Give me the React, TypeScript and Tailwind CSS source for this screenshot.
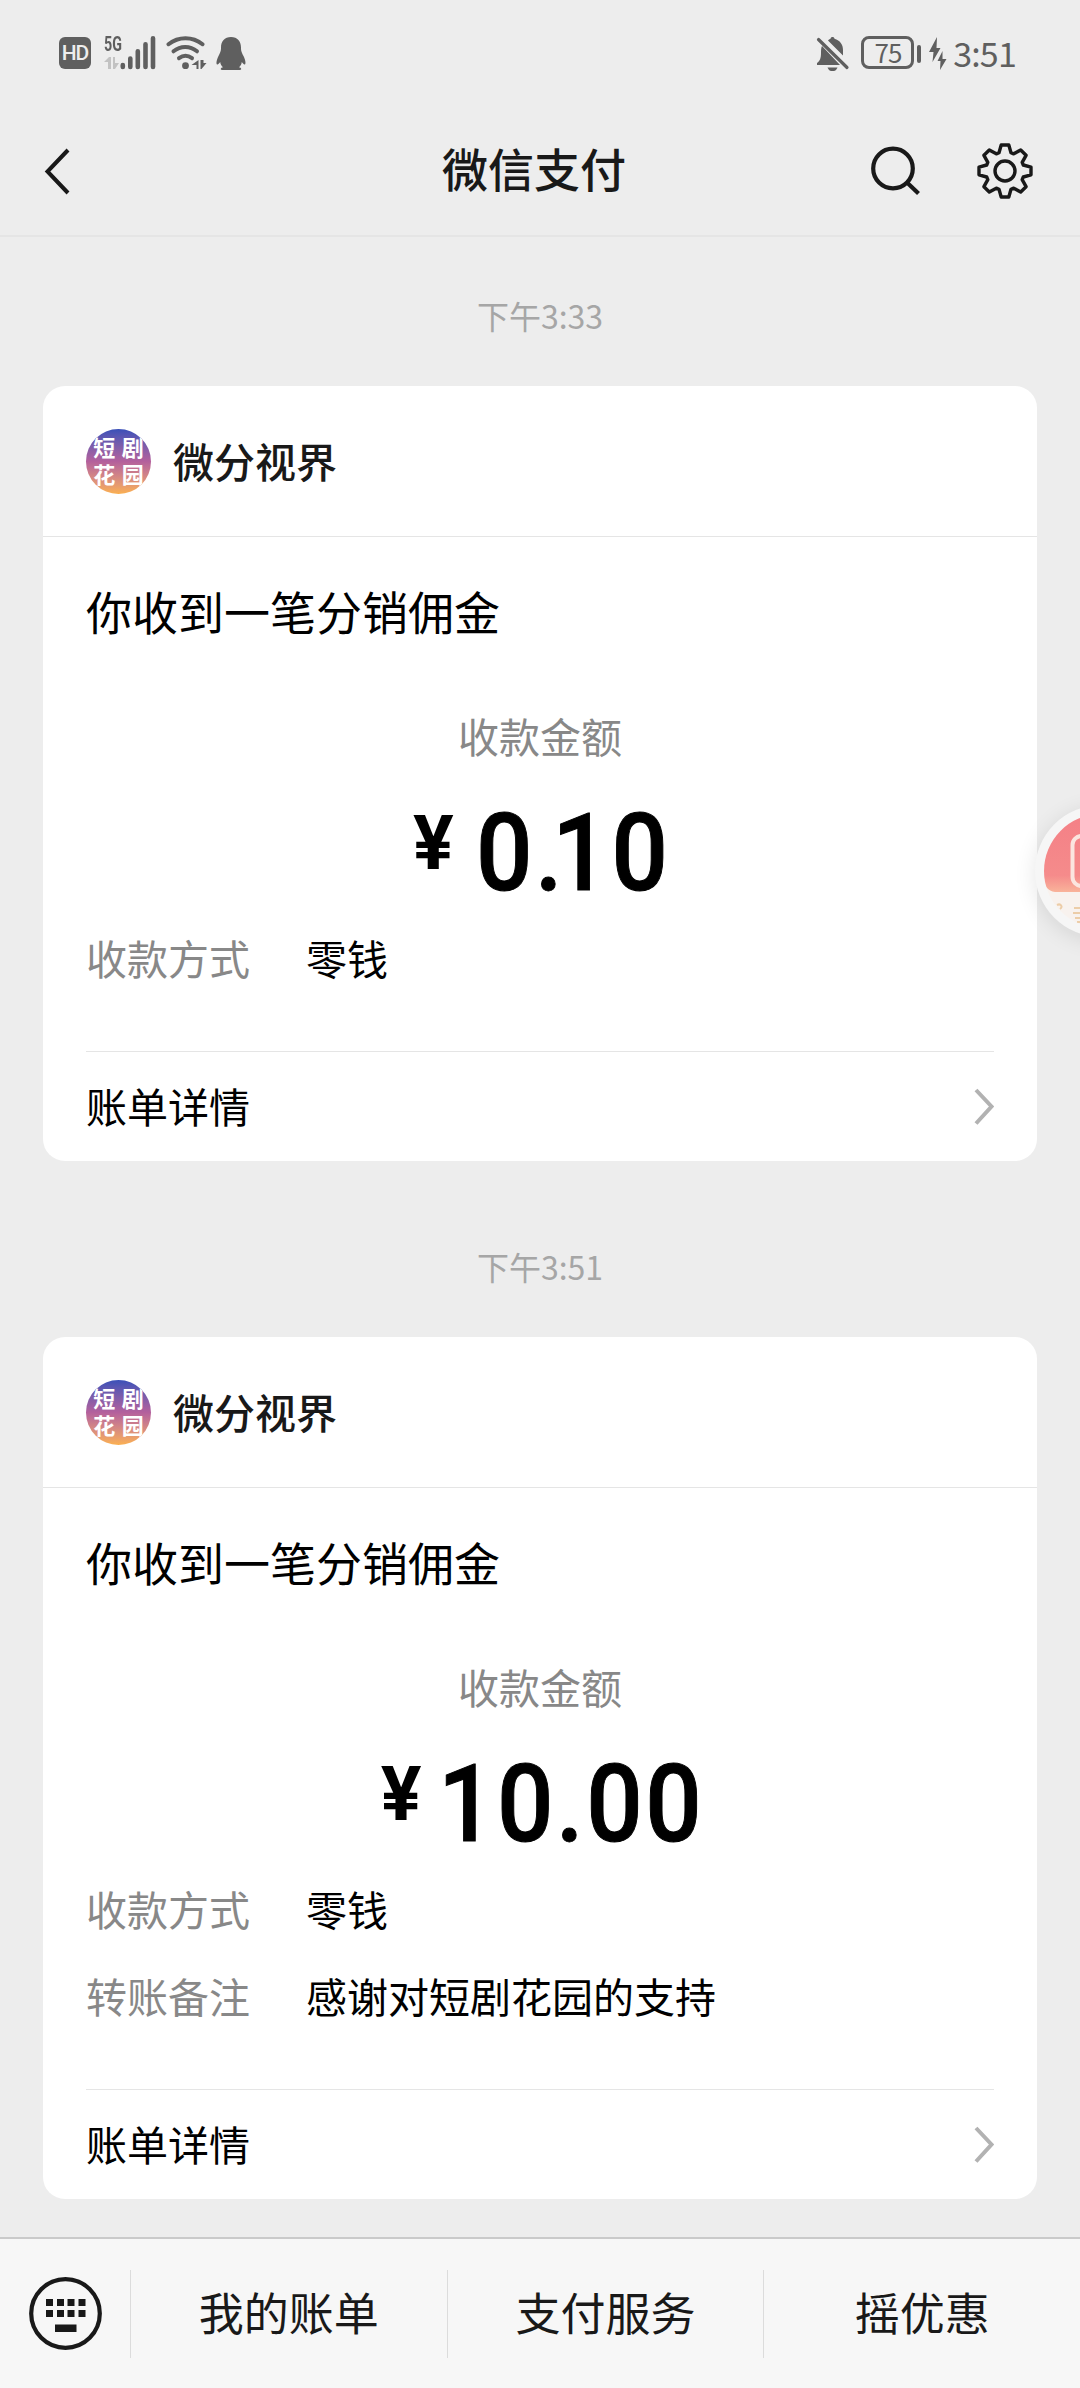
import type { ReactNode } from 'react';

interface PayRow {
  label: string;
  value: string;
}

interface PayMessage {
  id: number;
  time: string;
  whole: string;
  cents: string;
  tight: boolean;
  rows: PayRow[];
}

const messages: PayMessage[] = [
  {
    id: 1,
    time: '3:33',
    whole: '0.',
    cents: '10',
    tight: true,
    rows: [{ label: '收款方式', value: '零钱' }],
  },
  {
    id: 2,
    time: '3:51',
    whole: '10.',
    cents: '00',
    tight: false,
    rows: [
      { label: '收款方式', value: '零钱' },
      { label: '转账备注', value: '感谢对短剧花园的支持' },
    ],
  },
];

const menus = ['我的账单', '支付服务', '摇优惠'];

// Outline of one gear tooth, repeated every 45 degrees
const tooth = [[-6, -18.3], [-3.8, -26], [3.8, -26], [6, -18.3]];
const gearPoints = Array.from({ length: 8 }, (_, i) => {
  const a = (i * Math.PI) / 4;
  return tooth
    .map(([x, y]) => `${(x * Math.cos(a) - y * Math.sin(a)).toFixed(2)},${(x * Math.sin(a) + y * Math.cos(a)).toFixed(2)}`)
    .join(' ');
}).join(' ');

function StatusBar() {
  return (
    <div className="flex h-[106px] items-start justify-between pl-[59px] pr-[64px] pt-[36px] text-[#5f5f5f]">
      <div className="flex items-start">
        <div className="mt-px flex h-8 w-8 items-center justify-center rounded-[6px] bg-[#5f5f5f] font-['Roboto',sans-serif] text-[21px] font-medium leading-none tracking-[-1px] text-[#ededed]">
          HD
        </div>
        <div className="ml-[13px] flex w-[17px] flex-col">
          <span className="origin-left scale-x-[0.68] whitespace-nowrap font-['Roboto',sans-serif] text-[21px] font-bold leading-[16px]">5G</span>
          <svg className="mt-[4px]" width="16" height="14" viewBox="0 0 16 14" fill="#c2c2c2">
            <path d="M5 1h2v12H4V6H0zM9 1h2v6h4l-4 6H9z" />
          </svg>
        </div>
        <svg className="-ml-px" width="36" height="34" viewBox="0 0 36 34" stroke="currentColor" strokeWidth="4.6" strokeLinecap="round">
          <path d="M2.8 29v2M10.3 22.5V31M17.8 15.3V31M25.5 8.3V31M33 2.3V31" />
        </svg>
        <svg className="ml-[10px]" width="42" height="34" viewBox="0 0 42 34" fill="none" stroke="currentColor" strokeWidth="4" strokeLinecap="round">
          <path d="M2.5 8.2C12.5.2 26.5.2 36.5 8.2" />
          <path d="M7.5 15.3C14.5 9.6 24 9.6 31 15.3" />
          <path d="M13 22.2C17 19.2 22 19.2 26 22.2" />
          <circle cx="19.5" cy="29.7" r="3.4" fill="currentColor" stroke="none" />
          <path d="M32.500 24v9h-2v-4h-5zM34.500 24v9h1l5-6h-3v-3z" fill="currentColor" stroke="none" />
        </svg>
        <svg className="ml-[8px]" width="30" height="35" viewBox="0 0 30 35" fill="currentColor">
          <path d="M15 1C8.5 1 5 5.500 5 11.500C5 15 4.500 16 2.500 20C.5 24 0 27.500 1 28.500C2 29 3.500 27 4.200 26C4.500 28.500 5.500 30 7 31.300C4.500 31.800 4 33.800 6 34H24C26 33.800 25.500 31.800 23 31.300C24.500 30 25.500 28.500 25.800 26C26.500 27 28 29 29 28.500C30 27.500 29.500 24 27.500 20C25.500 16 25 15 25 11.500C25 5.500 21.500 1 15 1Z" />
        </svg>
      </div>
      <div className="flex items-start">
        <svg width="34" height="35" viewBox="0 0 34 35" fill="currentColor">
          <path d="M12 4.500C13 3.500 14 3 14.500 2.800C14.700 .4 18.300 .4 18.500 2.800C24 4.500 27 8.500 27 14V19.500Z" />
          <path d="M6 10C5 12 5 14 5 17C5 22 4 25 1 27V29H24Z" />
          <path d="M11.500 31.500H21.500C20.500 34.500 18.500 35 16.500 35C14.500 35 12.500 34.500 11.500 31.500Z" />
          <path d="M2.500 3.500L31 31.500" stroke="currentColor" strokeWidth="3.200" strokeLinecap="round" />
        </svg>
        <div className="ml-[11px] flex h-[33px] w-[53px] items-center justify-center rounded-[8px] border-[3px] border-[#5f5f5f] pb-[2px] pl-px font-['Noto_Sans_CJK_SC',sans-serif] text-[26px] leading-none tracking-[-0.8px]">
          75
        </div>
        <div className="ml-[3px] mt-[9px] h-[18px] w-1 rounded-[2px] bg-[#5f5f5f]" />
        <svg className="ml-[8px] mt-px" width="18" height="33" viewBox="0 0 18 33" fill="currentColor">
          <path d="M8 0L0 15H4.500L3.500 25L11.500 11H7.500zM13.500 14L8.500 24H11.500L11 33L17.500 22H13.500z" />
        </svg>
        <span className="ml-[6px] whitespace-nowrap font-['Noto_Sans_CJK_SC',sans-serif] text-[34px] leading-[34px] tracking-[-0.8px]">3:51</span>
      </div>
    </div>
  );
}

function NavBar() {
  return (
    <div className="flex h-[131px] items-start border-b-2 border-[#e5e5e5] pl-[43px] pt-[36px] text-[#191919]">
      <svg className="mt-[4px]" width="30" height="50" viewBox="0 0 30 50" fill="none" stroke="currentColor" strokeWidth="4">
        <path d="M25 4L4.500 25.500L25 47" />
      </svg>
      <h1 className="-mt-[3px] ml-[369px] w-[184px] whitespace-nowrap text-[46px] font-medium leading-[56px]">微信支付</h1>
      <svg className="ml-[242px]" width="56" height="56" viewBox="0 0 56 56" fill="none" stroke="currentColor" strokeWidth="4.200">
        <circle cx="25" cy="26.500" r="19.800" />
        <path d="M39.500 41L50.500 51.500" />
      </svg>
      <svg className="ml-[52px]" width="58" height="58" viewBox="-29 -29 58 58" fill="none" stroke="currentColor" strokeWidth="3.400" strokeLinejoin="round">
        <polygon points={gearPoints} />
        <circle r="10" />
      </svg>
    </div>
  );
}

function Avatar() {
  return (
    <div className="grid h-[65px] w-[65px] grid-cols-2 content-center justify-items-center gap-x-1 overflow-hidden rounded-full bg-linear-to-b from-[#3a50b8] via-[#b4609c] to-[#fbb04f] px-[6px] pb-[3px] text-[22px] font-bold leading-[27px] text-white">
      <span>短</span>
      <span>剧</span>
      <span>花</span>
      <span>园</span>
    </div>
  );
}

function Line({ children }: { children: ReactNode }) {
  return <div className="flex h-[87px] items-center pb-[2px] text-[41px] leading-[60px]">{children}</div>;
}

function Amount({ message }: { message: PayMessage }) {
  return (
    <div className="mt-[35px] flex h-[114px] items-start justify-center whitespace-nowrap font-['Roboto',sans-serif] font-medium">
      <span className="mt-[16px] text-[76px] font-bold leading-[54px]">¥</span>
      <span
        className={`mt-[15px] origin-left scale-x-[0.92] text-[108px] leading-[77px] tracking-[2.8px] [-webkit-text-stroke:1px_#000] ${
          message.tight ? 'ml-[22px] -mr-[20px]' : 'ml-[16px] -mr-[28px]'
        }`}
      >
        {message.whole}
        <span className={message.tight ? '-ml-[14px]' : ''}>{message.cents}</span>
      </span>
    </div>
  );
}

function PayCard({ message }: { message: PayMessage }) {
  return (
    <section className="mx-[43px] rounded-[22px] bg-white text-black">
      <header className="flex h-[151px] items-center gap-[22px] border-b border-[#e5e5e5] pl-[43px]">
        <Avatar />
        <span className="pb-[3px] text-[41px] font-medium leading-[60px] text-[#191919]">微分视界</span>
      </header>
      <div className="px-[43px]">
        <h2 className="pt-[39px] text-[46px] leading-[68px]">你收到一笔分销佣金</h2>
        <p className="mt-[61px] text-center text-[41px] leading-[60px] text-[#888888]">收款金额</p>
        <Amount message={message} />
        {message.rows.map((row) => (
          <Line key={row.label}>
            <span className="w-[220px] text-[#888888]">{row.label}</span>
            <span>{row.value}</span>
          </Line>
        ))}
        <footer className="mt-[50px] flex h-[110px] items-center justify-between border-t border-[#e5e5e5]">
          <span className="pb-[4px] text-[41px] leading-[60px]">账单详情</span>
          <svg width="20" height="38" viewBox="0 0 20 38" fill="none" stroke="#b2b2b2" strokeWidth="4">
            <path d="M2 2L17.500 18.500L2 35.500" />
          </svg>
        </footer>
      </div>
    </section>
  );
}

function FloatingBall() {
  return (
    <svg className="absolute right-0 top-[771px]" width="100" height="200" viewBox="981 771 100 200">
      <defs>
        <linearGradient id="ball" x1="0" y1="0" x2="0" y2="1">
          <stop offset="0" stopColor="#f47f86" />
          <stop offset="0.800" stopColor="#f58b8b" />
          <stop offset="1" stopColor="#f9b39a" />
        </linearGradient>
        <filter id="ballShadow" x="-50%" y="-50%" width="200%" height="200%">
          <feGaussianBlur stdDeviation="11" />
        </filter>
        <clipPath id="ballClip">
          <circle cx="1102" cy="871" r="57" />
        </clipPath>
      </defs>
      <circle cx="1102" cy="875" r="66" fill="#000" opacity="0.100" filter="url(#ballShadow)" />
      <circle cx="1102" cy="871" r="66" fill="#f6f6f6" />
      <g clipPath="url(#ballClip)">
        <rect x="1040" y="810" width="120" height="125" fill="#f8f2ee" />
        <path d="M1040 810H1160V892H1056C1049 891 1045 886 1045 878Z" fill="url(#ball)" />
        <rect x="1073.500" y="836" width="50" height="50" rx="9" fill="none" stroke="#fbe5df" strokeWidth="4" />
        <path d="M1058 905c4-2 6 2 3 4M1075 908h8M1074 913h9M1076 918h8M1078 922h6" fill="none" stroke="#eccda8" strokeWidth="2" />
      </g>
    </svg>
  );
}

function BottomMenu() {
  return (
    <nav className="flex h-[151px] items-center border-t-2 border-[#cacaca] bg-[#f7f7f7] text-[#191919]">
      <div className="flex w-[130px] pl-[28px]">
        <svg width="75" height="75" viewBox="0 0 75 75" fill="currentColor">
          <circle cx="37.500" cy="37.500" r="34.300" fill="none" stroke="currentColor" strokeWidth="4.200" />
          <path d="M18 23h7v7h-7zM29 23h7v7h-7zM39.500 23h7v7h-7zM50.500 23h7v7h-7zM18 34h7v7h-7zM29 34h7v7h-7zM39.500 34h7v7h-7zM50.500 34h7v7h-7zM27 48.500h21.500v7.500H27z" />
        </svg>
      </div>
      {menus.map((menu) => (
        <div key={menu} className="flex h-[88px] flex-1 items-center justify-center border-l border-[#dcdcdc] pb-[3px] text-[45px] leading-[60px]">
          {menu}
        </div>
      ))}
    </nav>
  );
}

export default function App() {
  return (
    <div className="relative flex h-[2388px] w-[1080px] flex-col overflow-hidden bg-[#ededed] font-['Noto_Sans_CJK_SC',sans-serif]">
      <StatusBar />
      <NavBar />
      <main className="flex-1">
        {messages.map((message) => (
          <div key={message.id} className="mb-[27px]">
            <p className="flex h-[149px] items-center justify-center pt-[7px] text-[32px] leading-[40px] text-[#a6a6a6]">
              下午{message.time}
            </p>
            <PayCard message={message} />
          </div>
        ))}
      </main>
      <BottomMenu />
      <FloatingBall />
    </div>
  );
}
